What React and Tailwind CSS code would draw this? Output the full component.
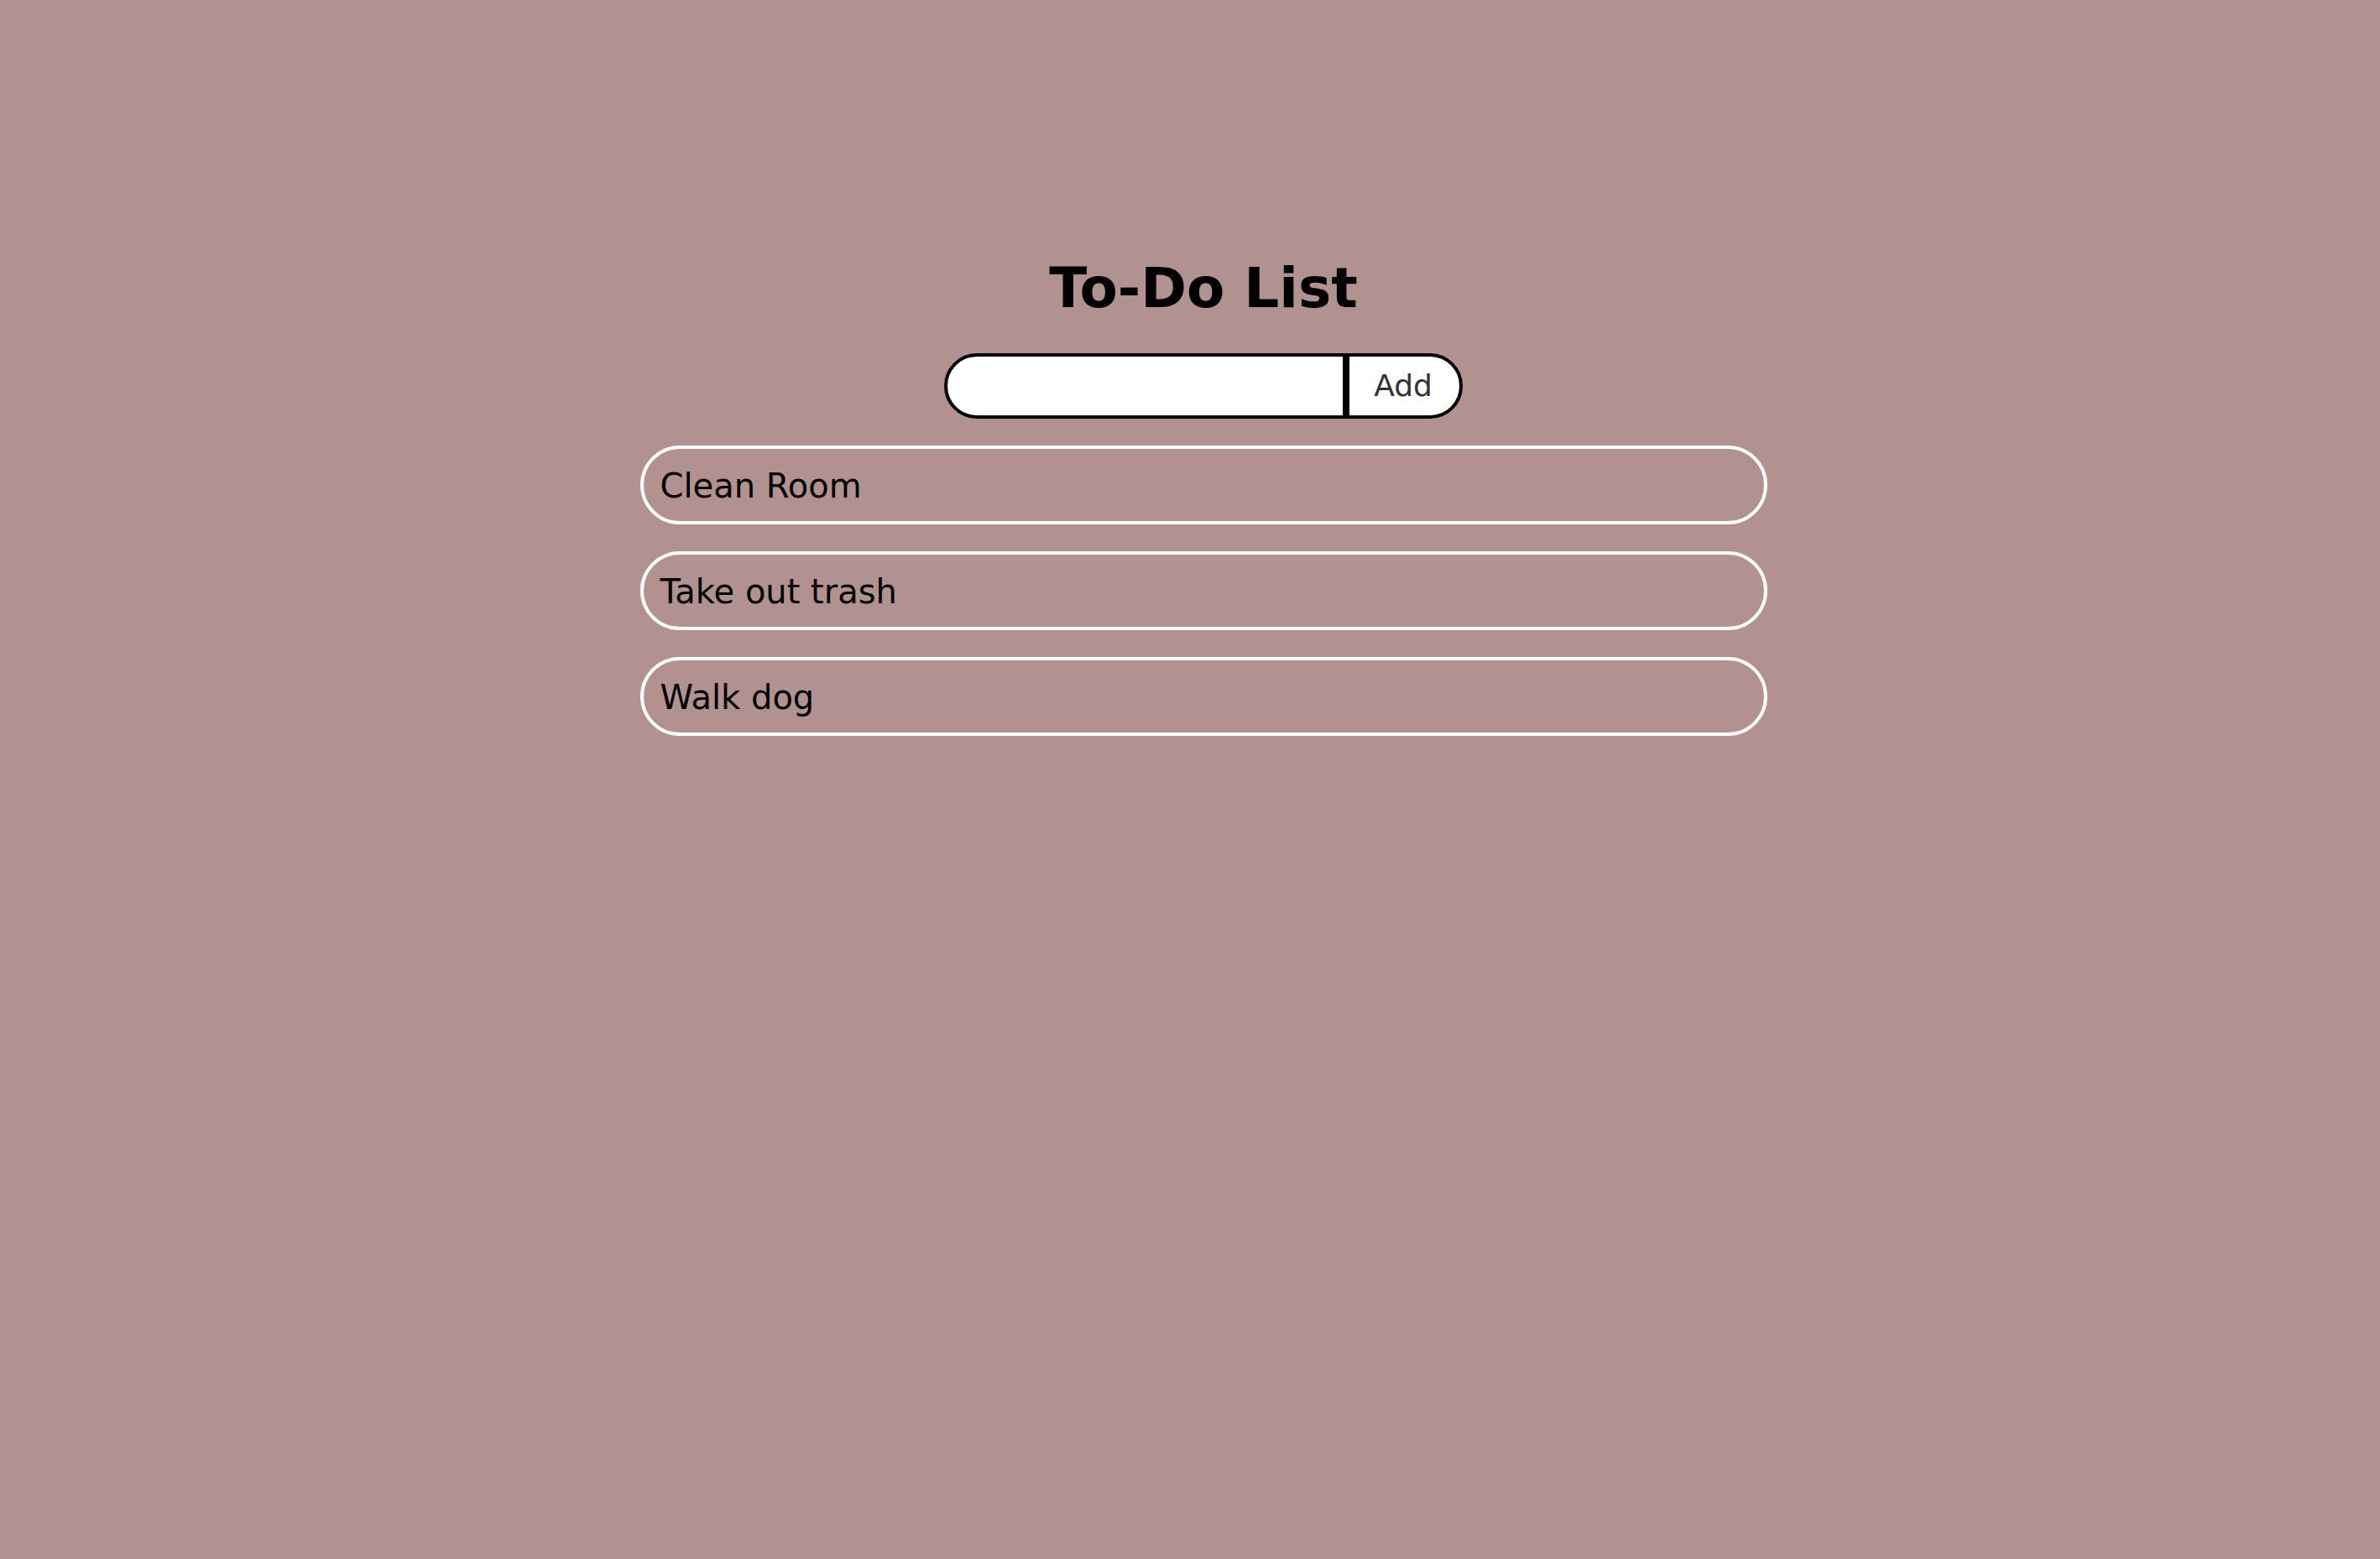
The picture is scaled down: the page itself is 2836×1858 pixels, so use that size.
export default function App() {
  const todos = ["Clean Room", "Take out trash", "Walk dog"];

  return (
    <div className="min-h-screen bg-[#b29290] pl-8 font-['DejaVu_Sans',Verdana,sans-serif] text-black">
      <div className="flex flex-col items-center pt-[305px]">
        <h1 className="text-[66px] font-bold leading-[77px]">To-Do List</h1>

        <form className="mt-[39px] flex h-[78px]" onSubmit={(e) => e.preventDefault()}>
          <input
            type="text"
            className="h-full w-[479px] rounded-l-full border-4 border-black bg-white px-6 text-[36px] outline-none"
          />
          <button
            type="submit"
            className="h-full rounded-r-full border-4 border-black bg-white pl-[29px] pr-[32px] text-[36px] text-[#333]"
          >
            Add
          </button>
        </form>

        <ul className="mt-[32px] flex w-[1343px] flex-col gap-[32px]">
          {todos.map((todo) => (
            <li
              key={todo}
              className="flex h-[94px] items-center rounded-full border-4 border-white px-5 pt-[2px] text-[40px]"
            >
              {todo}
            </li>
          ))}
        </ul>
      </div>
    </div>
  );
}
